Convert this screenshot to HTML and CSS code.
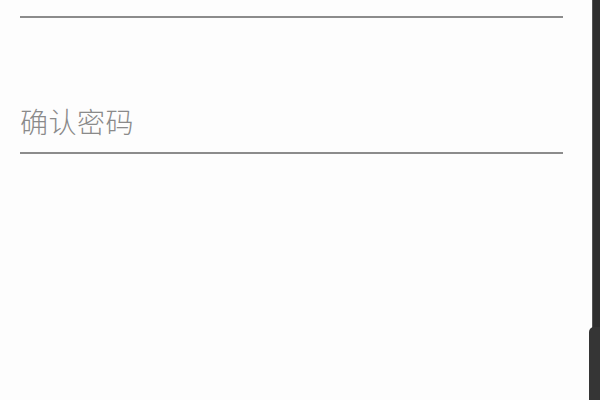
FILE: index.html
```
<!DOCTYPE html>
<html lang="zh">
<head>
<meta charset="utf-8">
<link rel="stylesheet" href="styles.css">
</head>
<body>
<main class="page">
  <form class="form">
    <div class="field field-prev"><span class="placeholder">设置密码</span></div>
    <div class="field"><span class="placeholder">确认密码</span></div>
  </form>
</main>
<div class="rail"><div class="thumb"></div></div>
</body>
</html>
```
FILE: styles.css
```
html, body {
  margin: 0;
  padding: 0;
  background: #fdfdfd;
  overflow: hidden;
  height: 400px;
}
.page {
  padding: 0 37px 0 20px;
  font-family: "Noto Sans CJK SC", "Noto Sans", sans-serif;
}
.form {
  margin-top: -118px;
  display: flex;
  flex-direction: column;
}
.field {
  padding: 89px 0 17px 0;
  line-height: 28px;
  height: 28px;
  border-bottom: 2px solid #8c8c8c;
}
.field-prev {
  padding: 87px 0 19px 0;
}
.placeholder {
  font-size: 28px;
  font-weight: 300;
  color: #8a8a8a;
  letter-spacing: 0.5px;
}
.rail {
  position: fixed;
  top: 0;
  right: 0;
  width: 7px;
  height: 400px;
  background: #2f2f2f;
  border-left: 1px solid #555;
}
.thumb {
  position: absolute;
  right: 0;
  top: 327px;
  width: 11px;
  height: 73px;
  background: #353535;
  border-top-left-radius: 5px;
}
```
